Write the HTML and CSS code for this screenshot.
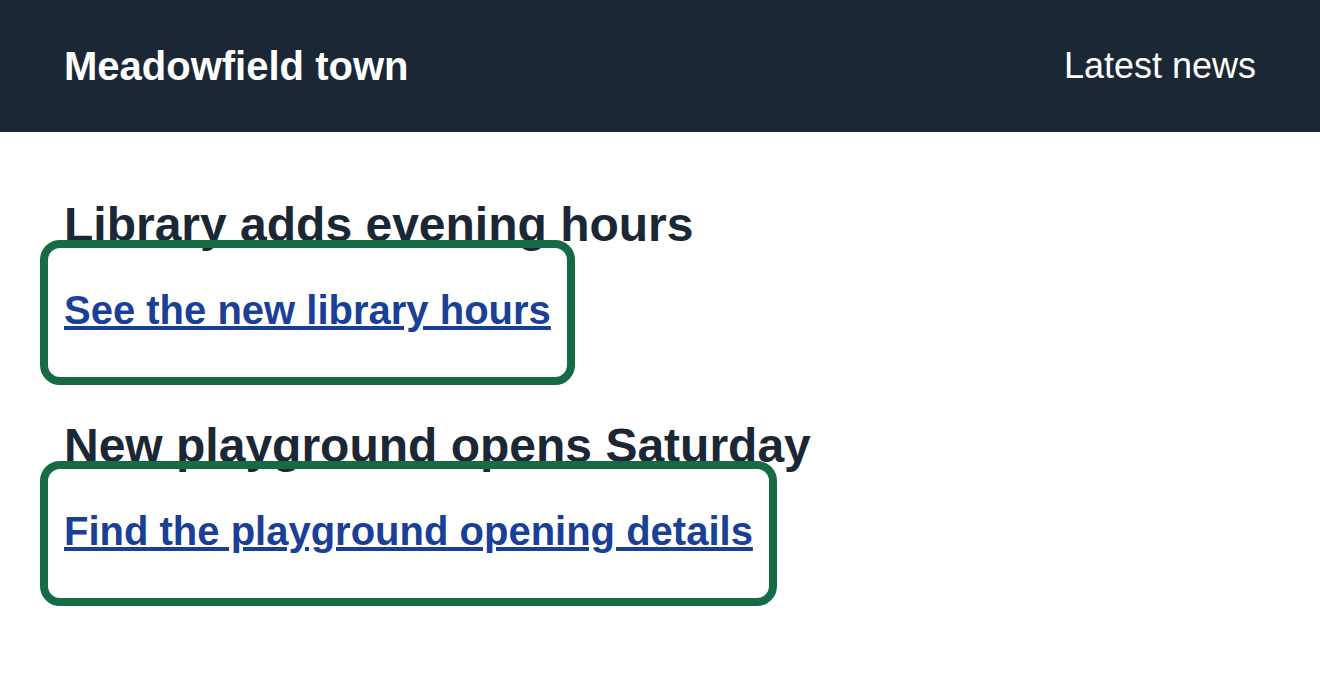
FILE: index.html
```html
<!DOCTYPE html>
<html lang="en">
<head>
    <meta charset="UTF-8">
    <meta name="viewport" content="width=device-width, initial-scale=1.0">
    <title>Meadowfield town</title>
    <link rel="stylesheet" href="styles.css">
</head>
<body>
    <!-- Site header -->
    <header class="site-header">
        <div class="site-name">Meadowfield town</div>
        <nav class="site-nav">Latest news</nav>
    </header>

    <!-- News stories -->
    <main class="news">
        <article class="story">
            <h2 class="story-title">Library adds evening hours</h2>
            <p class="story-link"><a href="#library">See the new library hours</a></p>
        </article>
        <article class="story">
            <h2 class="story-title">New playground opens Saturday</h2>
            <p class="story-link"><a href="#playground">Find the playground opening details</a></p>
        </article>
    </main>
</body>
</html>
```

FILE: styles.css
```css
/* Page basics */
body {
    margin: 0;
    font-family: "Liberation Sans", Arial, sans-serif;
    background: #fff;
    color: #1b2735;
}

/* Header bar */
.site-header {
    display: flex;
    justify-content: space-between;
    align-items: center;
    height: 132px;
    padding: 0 64px;
    box-sizing: border-box;
    background: #1b2735;
    color: #fff;
}
.site-name {
    font-size: 40px;
    font-weight: bold;
}
.site-nav {
    font-size: 36px;
}

/* Stories */
.news {
    padding: 63px 64px;
}
.story + .story {
    margin-top: 76px;
}
.story-title {
    margin: 0 0 25px;
    font-size: 48px;
    line-height: 1.25;
}
.story-link {
    margin: 0;
    font-size: 40px;
    line-height: 1.5;
}

/* Links show a large rounded target ring */
.story-link a {
    margin-left: -24px;
    padding: 40px 16px 45px;
    border: 8px solid #166b44;
    border-radius: 20px;
    color: #1a3f97;
    font-weight: bold;
    text-decoration: underline;
}
```
